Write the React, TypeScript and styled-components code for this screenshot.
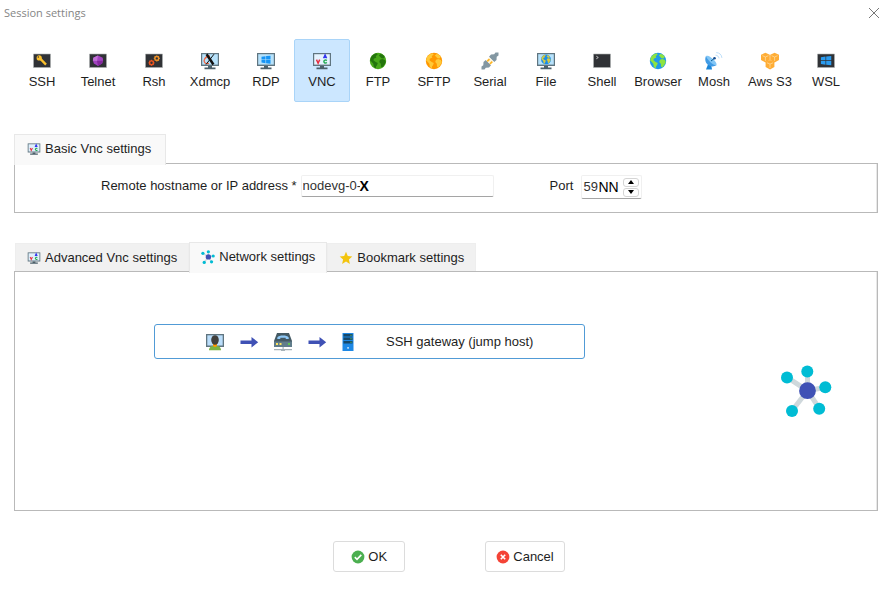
import React, { useState } from "react";
import styled, { createGlobalStyle } from "styled-components";

const GlobalStyle = createGlobalStyle`
  * { box-sizing: border-box; }
  body { margin: 0; background: #fff; color: #1e1e1e; }
  body, button, input { font-family: "Liberation Sans", Arial, sans-serif; font-size: 13px; line-height: 16px; }
  button, input { color: inherit; margin: 0; padding: 0; }
  svg { display: block; flex: none; }
`;

const Dialog = styled.main`
  display: flex;
  flex-direction: column;
  padding: 0 10px 23px 14px;
`;

const TitleBar = styled.header`
  display: flex;
  align-items: center;
  justify-content: space-between;
  height: 26px;
  margin: 0 -6px 13px -10px;
`;

const Title = styled.h1`
  margin: 0;
  font: 400 11px/16px "Open Sans", sans-serif;
  color: #858585;
`;

const CloseButton = styled.button`
  padding: 5px;
  border: 0;
  background: none;
`;

const Toolbar = styled.nav`
  display: grid;
  grid-template-columns: repeat(15, 56px);
  height: 63px;
`;

const ProtocolButton = styled.button<{ $active: boolean }>`
  display: flex;
  flex-direction: column;
  align-items: center;
  gap: 3px;
  padding-top: 11px;
  border: 1px solid ${(p) => (p.$active ? "#a9d4f8" : "transparent")};
  border-radius: 2px;
  background: ${(p) => (p.$active ? "#cce7ff" : "transparent")};
  white-space: nowrap;
`;

const Section = styled.section<{ $top: number }>`
  display: flex;
  flex-direction: column;
  margin-top: ${(p) => p.$top}px;
`;

const TabList = styled.div<{ $inset?: number }>`
  display: flex;
  align-items: flex-end;
  padding-left: ${(p) => p.$inset ?? 0}px;
`;

const Tab = styled.button<{ $active: boolean }>`
  display: flex;
  align-items: center;
  gap: 4px;
  height: ${(p) => (p.$active ? 31 : 28)}px;
  margin-bottom: ${(p) => (p.$active ? -2 : 0)}px;
  padding: 0 11px ${(p) => (p.$active ? 2 : 0)}px;
  border: 1px solid ${(p) => (p.$active ? "#e8e8e8" : "#eeeeee")};
  border-bottom: 0;
  background: ${(p) => (p.$active ? "#f9f9f9" : "#f1f1f1")};
  position: relative;
  z-index: ${(p) => (p.$active ? 1 : 0)};
`;

const WideTab = styled(Tab)`
  padding: 0 14px 2px 12px;
`;

const Panel = styled.div`
  border: 1px solid #b9b9b9;
  box-shadow: inset -1px 0 #e8e8e8;
`;

const FormRow = styled(Panel)`
  display: flex;
  align-items: flex-start;
  padding: 11px 20px 13px 86px;
`;

const FieldLabel = styled.label`
  padding-top: 3px;
  margin-right: 4px;
`;

const PortLabel = styled(FieldLabel)`
  margin: 0 8px 0 56px;
`;

const Field = styled.div<{ $width: number; $height: number }>`
  display: flex;
  align-items: center;
  width: ${(p) => p.$width}px;
  height: ${(p) => p.$height}px;
  padding: 0 2px 0 1px;
  border: 1px solid #f0f0f0;
  border-bottom-color: #a5a5a5;
  border-radius: 2px;
  color: #333;
`;

const TextInput = styled.input<{ $width: number }>`
  width: ${(p) => p.$width}px;
  border: 0;
  outline: 0;
  background: none;
`;

const Suffix = styled.span<{ $bold?: boolean }>`
  color: #000;
  font-size: 14px;
  font-weight: ${(p) => (p.$bold ? 700 : 400)};
`;

const Stepper = styled.div`
  display: grid;
  gap: 1px;
  margin-left: auto;
`;

const StepButton = styled.button`
  display: grid;
  place-items: center;
  width: 16px;
  height: 9px;
  border: 1px solid #d5d5d5;
  border-radius: 3px;
  background: #fff;
`;

const NetworkPanel = styled(Panel)`
  display: flex;
  align-items: flex-start;
  justify-content: space-between;
  min-height: 240px;
  padding: 52px 45px 20px 139px;
`;

const GatewayButton = styled.button`
  display: flex;
  align-items: center;
  width: 431px;
  height: 35px;
  padding-left: 50px;
  border: 1px solid #519bd6;
  border-radius: 3px;
  background: #fff;
`;

const GatewayPath = styled.span`
  display: flex;
  align-items: center;
  gap: 14px;
  margin-right: 31px;
`;

const NetworkArt = styled.div`
  padding-top: 41px;
`;

const Actions = styled.footer`
  display: flex;
  justify-content: center;
  gap: 80px;
  margin-top: 30px;
  padding-left: 6px;
`;

const ActionButton = styled.button`
  display: flex;
  align-items: center;
  justify-content: center;
  gap: 3px;
  min-width: 72px;
  height: 31px;
  padding: 0 10px;
  border: 1px solid #dcdcdc;
  border-radius: 3px;
  background: #fff;
`;

const Monitor = ({ children, size = 20, screen = "#b7e2fb" }: { children?: React.ReactNode; size?: number; screen?: string }) => (
  <svg width={size} height={size} viewBox="0 0 20 20" aria-hidden="true">
    <path d="M1 2h18v13H1z" fill="#607580" />
    <path d="M2.2 3.2h15.6v10.4H2.2z" fill={screen} />
    <path d="M8 15h4v1.6h3.5v1.6h-11v-1.6H8z" fill="#4c606b" />
    {children}
  </svg>
);

const Terminal = ({ children }: { children: React.ReactNode }) => (
  <svg width="20" height="20" viewBox="0 0 20 20" aria-hidden="true">
    <path d="M1.5 3h17v13.5h-17z" fill="#303236" stroke="#aeb1b3" strokeWidth=".6" />
    {children}
  </svg>
);

const Globe = ({ sea, land, scale = 1 }: { sea: string; land: string; scale?: number }) => (
  <g transform={`translate(${10 - 10 * scale} ${scale < 1 ? 8.4 - 10 * scale : 0}) scale(${scale})`}>
    <circle cx="10" cy="10" r="8.2" fill={sea} />
    <path d="M3 6 5.4 3.4l3.2-1.2 1.1 1.5-2 1.2.6 1.5-2.5 1.4-.3 1.5L7.7 11l2.1 1-.8 2.3-1 1.2-.1 2L5.9 16l-.6-3.2-2-2.4-1.2-.9zM12.3 3.1l2.4.4 2.1 2.3-1.3 1.6-2.2-.2-1.4-1.7-1.1-.8zM12 8.7l2.3-.7 2.6 1.1.9 1.8-1.5 3-2.1 2.5-1.2-.9-.2-2.8-1.6-1.8z" fill={land} />
  </g>
);

const GlobeIcon = ({ sea, land }: { sea: string; land: string }) => (
  <svg width="20" height="20" viewBox="0 0 20 20" aria-hidden="true"><Globe sea={sea} land={land} /></svg>
);

const WindowsMark = ({ x = 5.5, y = 4.7, fill = "#1694f5", scale = 1 }) => (
  <path transform={`translate(${x} ${y}) scale(${scale})`} d="M0 1.1 4 .5v3.2H0zM4.6.4 9 0v3.7H4.6zM0 4.3h4v3.2L0 6.9zM4.6 4.3H9V8l-4.4-.4z" fill={fill} />
);

const VncIcon = ({ size = 20, screen = "#dff0fb" }: { size?: number; screen?: string }) => (
  <Monitor size={size} screen={screen}>
    <g fill="none" strokeWidth="1.5">
      <path d="m4.5 8.6 1.6 3.6 1.6-3.6" stroke="#e52e42" />
      <path d="m11.6 7.2 1.5-3.2 1.5 3.2M12 6.3h2.2" stroke="#3438ef" />
      <path d="M14.8 9.6c-1.2-1-2.9-.5-2.9.9s1.6 2.1 3 1" stroke="#23aa52" />
    </g>
  </Monitor>
);

const Gear = ({ x, y, color }: { x: number; y: number; color: string }) => (
  <g transform={`translate(${x} ${y})`}>
    <path d="M0-3V3M-3 0H3M-2.1-2.1l4.2 4.2m0-4.2-4.2 4.2" stroke={color} strokeWidth="1.3" />
    <circle r="1.9" fill="#303236" stroke={color} strokeWidth="1.4" />
  </g>
);

const Cube = ({ x, y }: { x: number; y: number }) => (
  <g transform={`translate(${x} ${y})`}>
    <path d="m0-4.8 4.4 1.9v5.3L0 4.8l-4.4-2.4v-5.3z" fill="#ffad35" />
    <path d="m-3-1.9 3 1.3 3-1.3M0-.6v3.9" fill="none" stroke="#ffe0a8" strokeWidth=".7" />
  </g>
);

const NetworkIcon = ({ size, hub = 8.4 }: { size: number; hub?: number }) => (
  <svg width={size} height={size} viewBox="0 0 52 52" aria-hidden="true">
    <path d="m27.5 25.7-20-13m20 13v-19m0 19 18-3.4m-18 3.4 12 18m-12-18-15.5 20" stroke="#cfd8dc" strokeWidth="5" />
    <g fill="#00bcd4">
      <circle cx="7" cy="12.5" r="6" /><circle cx="27.3" cy="6.5" r="6" /><circle cx="45.3" cy="22.3" r="6" /><circle cx="39.2" cy="43.7" r="6" /><circle cx="12" cy="46" r="6" />
    </g>
    <circle cx="27.5" cy="25.7" r={hub} fill="#3f51b5" />
  </svg>
);

const StarIcon = () => (
  <svg width="14" height="14" viewBox="0 0 14 14" aria-hidden="true">
    <path d="m7 .8 1.8 4.1 4.5.5-3.4 3 1 4.5L7 10.6l-3.9 2.3 1-4.5-3.4-3 4.5-.5z" fill="#f3c40e" />
  </svg>
);

const ArrowIcon = () => (
  <svg width="20" height="20" viewBox="0 0 20 20" aria-hidden="true">
    <path d="M1.5 8.5h11V5l6.7 5.2-6.7 5.2V12h-11z" fill="#3f51b5" />
  </svg>
);

const UserMonitorIcon = () => (
  <svg width="20" height="20" viewBox="0 0 20 20" aria-hidden="true">
    <path d="M1 2h18v13H1z" fill="#607580" /><path d="M2.3 3.3h15.4v10.2H2.3z" fill="#bbdefb" />
    <path d="M4 18.2c.2-3 2-4.4 6-4.4s5.8 1.4 6 4.4z" fill="#7cb342" />
    <path d="M8 11h4v3l-2 1.3L8 14z" fill="#ff9800" />
    <ellipse cx="10" cy="8" rx="3.8" ry="4.8" fill="#413f3c" />
  </svg>
);

const RouterIcon = () => (
  <svg width="20" height="20" viewBox="0 0 20 20" aria-hidden="true">
    <path d="M4 1h12l3 8v6H1V9z" fill="#455a64" /><path d="M1 9.5h18V15H1z" fill="#607d8b" />
    <path d="M4.3 7V5.4C6 3 14 3 15.7 5.4V7h-3V5.7H7.3V7z" fill="#90caf9" />
    <path d="M3 11h2v2H3zm3.5 0h2v2h-2z" fill="#ffe45c" /><path d="M15 11h2v2h-2z" fill="#61c850" />
    <path d="M9.5 15h1.2v2H19v1.3h-7V19H8v-.7H1V17h8.5z" fill="#a6b2b8" />
  </svg>
);

const ServerIcon = () => (
  <svg width="14" height="20" viewBox="3 0 14 20" aria-hidden="true">
    <path d="M4.5 1h11v18h-11z" fill="#1e88e5" />
    <path d="M5.5 2h9v2.5h-9zm0 3.5h9V8h-9zm0 3.5h9v2.5h-9z" fill="#174869" />
    <path d="M12.5 2.7h1v1h-1zm0 3.5h1v1h-1zm0 3.5h1v1h-1z" fill="#62d45b" />
    <path d="M9.2 15h1.7v1.7H9.2z" fill="#bbdefb" />
  </svg>
);

const StatusIcon = ({ ok = false }: { ok?: boolean }) => (
  <svg width="14" height="14" viewBox="0 0 14 14" aria-hidden="true">
    <circle cx="7" cy="7" r="6.4" fill={ok ? "#4caf50" : "#f44336"} />
    <path d={ok ? "m3.8 7.2 2.2 2.1 4.3-4.4" : "m4.8 4.8 4.4 4.4m0-4.4L4.8 9.2"} fill="none" stroke="#fff" strokeWidth="1.6" />
  </svg>
);

const SerialIcon = () => (
  <svg width="20" height="20" viewBox="0 0 20 20" aria-hidden="true">
    <path d="M1.5 18.5v-3l1.8-1.3.2-3.2L5.7 9l5.3 5.2-2 2.3-3.2.3-1.3 1.7zM18.5 1.5v3l-1.8 1.3-.2 3.2-2.2 2L9 5.8l2-2.3 3.2-.3 1.3-1.7z" fill="#8397a2" />
    <path d="m6.3 9.3 2.9-2.9 4.5 4.5-2.9 2.9z" fill="#fff5dc" />
    <path d="m7.2 10.4 2.3-2.3M9.9 13l2.3-2.3" stroke="#fdb525" strokeWidth="1.7" />
  </svg>
);

const DishIcon = () => (
  <svg width="20" height="20" viewBox="0 0 20 20" aria-hidden="true">
    <path d="M4.5 12 2 18.5h6L7 13z" fill="#1c86d8" />
    <path d="M2 5c-1.6 3.5-.5 7.4 2.7 9.2 2.6 1.6 5.4 1.5 7.7.1z" fill="#409be5" />
    <path d="M2 5c2.2-1 4.4.6 6.7 2.8 2.6 2.5 4.5 4.9 3.7 6.5C9.3 14.6 3.5 9.5 2 5" fill="#83c6f5" />
    <path d="m7 10 3.4-2.6" stroke="#075b95" />
    <circle cx="10.5" cy="7.2" r="1.3" fill="#174e91" />
    <path d="M11.5 4.2c2 .1 3.3 1.3 3.5 3.2M12.2 1.6c3.2 0 5.5 2.2 5.7 5.3" fill="none" stroke="#b4daf8" strokeWidth=".9" />
  </svg>
);

const protocols: { name: string; icon: React.ReactNode }[] = [
  { name: "SSH", icon: <Terminal><path d="m8.2 7.6 5.8 6" stroke="#fbc02d" strokeWidth="2.3" /><circle cx="7.2" cy="6.9" r="2.6" fill="#fbc02d" /><circle cx="6.3" cy="6" r=".7" fill="#303236" /></Terminal> },
  { name: "Telnet", icon: <Terminal><path d="m10 4.4 4.7 2.4.4 3-1 2.6-4.1 2.6-4.1-2.6-1-2.6.4-3z" fill="#a243c0" /><path d="m10 4.4-4.7 2.4-.4 3L9 10z" fill="#c171d6" /><path d="m9 10 6.1-.2-1 2.6-4.1 2.6z" fill="#84289f" /></Terminal> },
  { name: "Rsh", icon: <Terminal><Gear x={7.5} y={11.8} color="#ec5420" /><Gear x={12.8} y={7.4} color="#ef9228" /></Terminal> },
  { name: "Xdmcp", icon: <Monitor><path d="M9 12.4c-4.2 1-5.8-1.7-4.3-4.5C5.8 6 8 5 10 5" fill="none" stroke="#ef6c4a" strokeWidth="1.3" /><path d="m6.6 3.3 6.8 10.2" stroke="#111" strokeWidth="2.5" /><path d="M14 3.2 6 13.5" stroke="#111" strokeWidth="1" /></Monitor> },
  { name: "RDP", icon: <Monitor><WindowsMark /></Monitor> },
  { name: "VNC", icon: <VncIcon screen="#e6f3ff" /> },
  { name: "FTP", icon: <GlobeIcon sea="#49a91a" land="#24750d" /> },
  { name: "SFTP", icon: <GlobeIcon sea="#ff9800" land="#ffc938" /> },
  { name: "Serial", icon: <SerialIcon /> },
  { name: "File", icon: <Monitor><Globe sea="#188ceb" land="#d4c943" scale={0.6} /></Monitor> },
  { name: "Shell", icon: <Terminal><path d="m4.3 5.2 2 1.3-2 1.3" fill="none" stroke="#d1d1d1" strokeWidth=".9" /></Terminal> },
  { name: "Browser", icon: <GlobeIcon sea="#209ae7" land="#8ee33f" /> },
  { name: "Mosh", icon: <DishIcon /> },
  { name: "Aws S3", icon: <svg width="20" height="20" viewBox="0 0 20 20" aria-hidden="true"><Cube x={5.4} y={6.6} /><Cube x={14.6} y={6.6} /><Cube x={10} y={13.7} /></svg> },
  { name: "WSL", icon: <Terminal><WindowsMark x={4.9} y={5} fill="#2a9bef" scale={1.15} /></Terminal> },
];

const tabs = [
  { name: "Advanced Vnc settings", icon: <VncIcon size={14} /> },
  { name: "Network settings", icon: <NetworkIcon size={14} hub={10} /> },
  { name: "Bookmark settings", icon: <StarIcon /> },
];

export default function App() {
  const [protocol, setProtocol] = useState("VNC");
  const [tab, setTab] = useState("Network settings");
  const [host, setHost] = useState("nodevg-0-");
  const [port, setPort] = useState("59");
  const stepPort = (by: number) => setPort(String(Math.max(0, Number(port) + by)));

  return (
    <>
      <GlobalStyle />
      <Dialog>
        <TitleBar>
          <Title>Session settings</Title>
          <CloseButton aria-label="Close">
            <svg width="10" height="10" viewBox="0 0 10 10"><path d="m0 0 10 10M10 0 0 10" stroke="#777" /></svg>
          </CloseButton>
        </TitleBar>
        <Toolbar aria-label="Session type">
          {protocols.map((p) => (
            <ProtocolButton key={p.name} $active={protocol === p.name} aria-pressed={protocol === p.name} onClick={() => setProtocol(p.name)}>
              {p.icon}
              <span>{p.name}</span>
            </ProtocolButton>
          ))}
        </Toolbar>

        <Section $top={32}>
          <TabList role="tablist">
            <WideTab $active role="tab" aria-selected="true"><VncIcon size={14} />Basic Vnc settings</WideTab>
          </TabList>
          <FormRow as="form" onSubmit={(e: React.FormEvent) => e.preventDefault()}>
            <FieldLabel htmlFor="host">Remote hostname or IP address *</FieldLabel>
            <Field $width={193} $height={22}>
              <TextInput id="host" $width={57} value={host} onChange={(e) => setHost(e.target.value)} />
              <Suffix $bold>X</Suffix>
            </Field>
            <PortLabel htmlFor="port">Port</PortLabel>
            <Field $width={61} $height={24}>
              <TextInput id="port" $width={15} value={port} onChange={(e) => setPort(e.target.value)} />
              <Suffix>NN</Suffix>
              <Stepper>
                <StepButton type="button" aria-label="Increase port" onClick={() => stepPort(1)}>
                  <svg width="6" height="4" viewBox="0 0 6 4"><path d="m0 4 3-4 3 4z" /></svg>
                </StepButton>
                <StepButton type="button" aria-label="Decrease port" onClick={() => stepPort(-1)}>
                  <svg width="6" height="4" viewBox="0 0 6 4"><path d="m0 0 3 4 3-4z" /></svg>
                </StepButton>
              </Stepper>
            </Field>
          </FormRow>
        </Section>

        <Section $top={29}>
          <TabList role="tablist" $inset={1}>
            {tabs.map((t) => (
              <Tab key={t.name} $active={tab === t.name} role="tab" aria-selected={tab === t.name} onClick={() => setTab(t.name)}>
                {t.icon}{t.name}
              </Tab>
            ))}
          </TabList>
          <NetworkPanel role="tabpanel">
            <GatewayButton>
              <GatewayPath><UserMonitorIcon /><ArrowIcon /><RouterIcon /><ArrowIcon /><ServerIcon /></GatewayPath>
              SSH gateway (jump host)
            </GatewayButton>
            <NetworkArt><NetworkIcon size={52} /></NetworkArt>
          </NetworkPanel>
        </Section>

        <Actions>
          <ActionButton><StatusIcon ok />OK</ActionButton>
          <ActionButton><StatusIcon />Cancel</ActionButton>
        </Actions>
      </Dialog>
    </>
  );
}
